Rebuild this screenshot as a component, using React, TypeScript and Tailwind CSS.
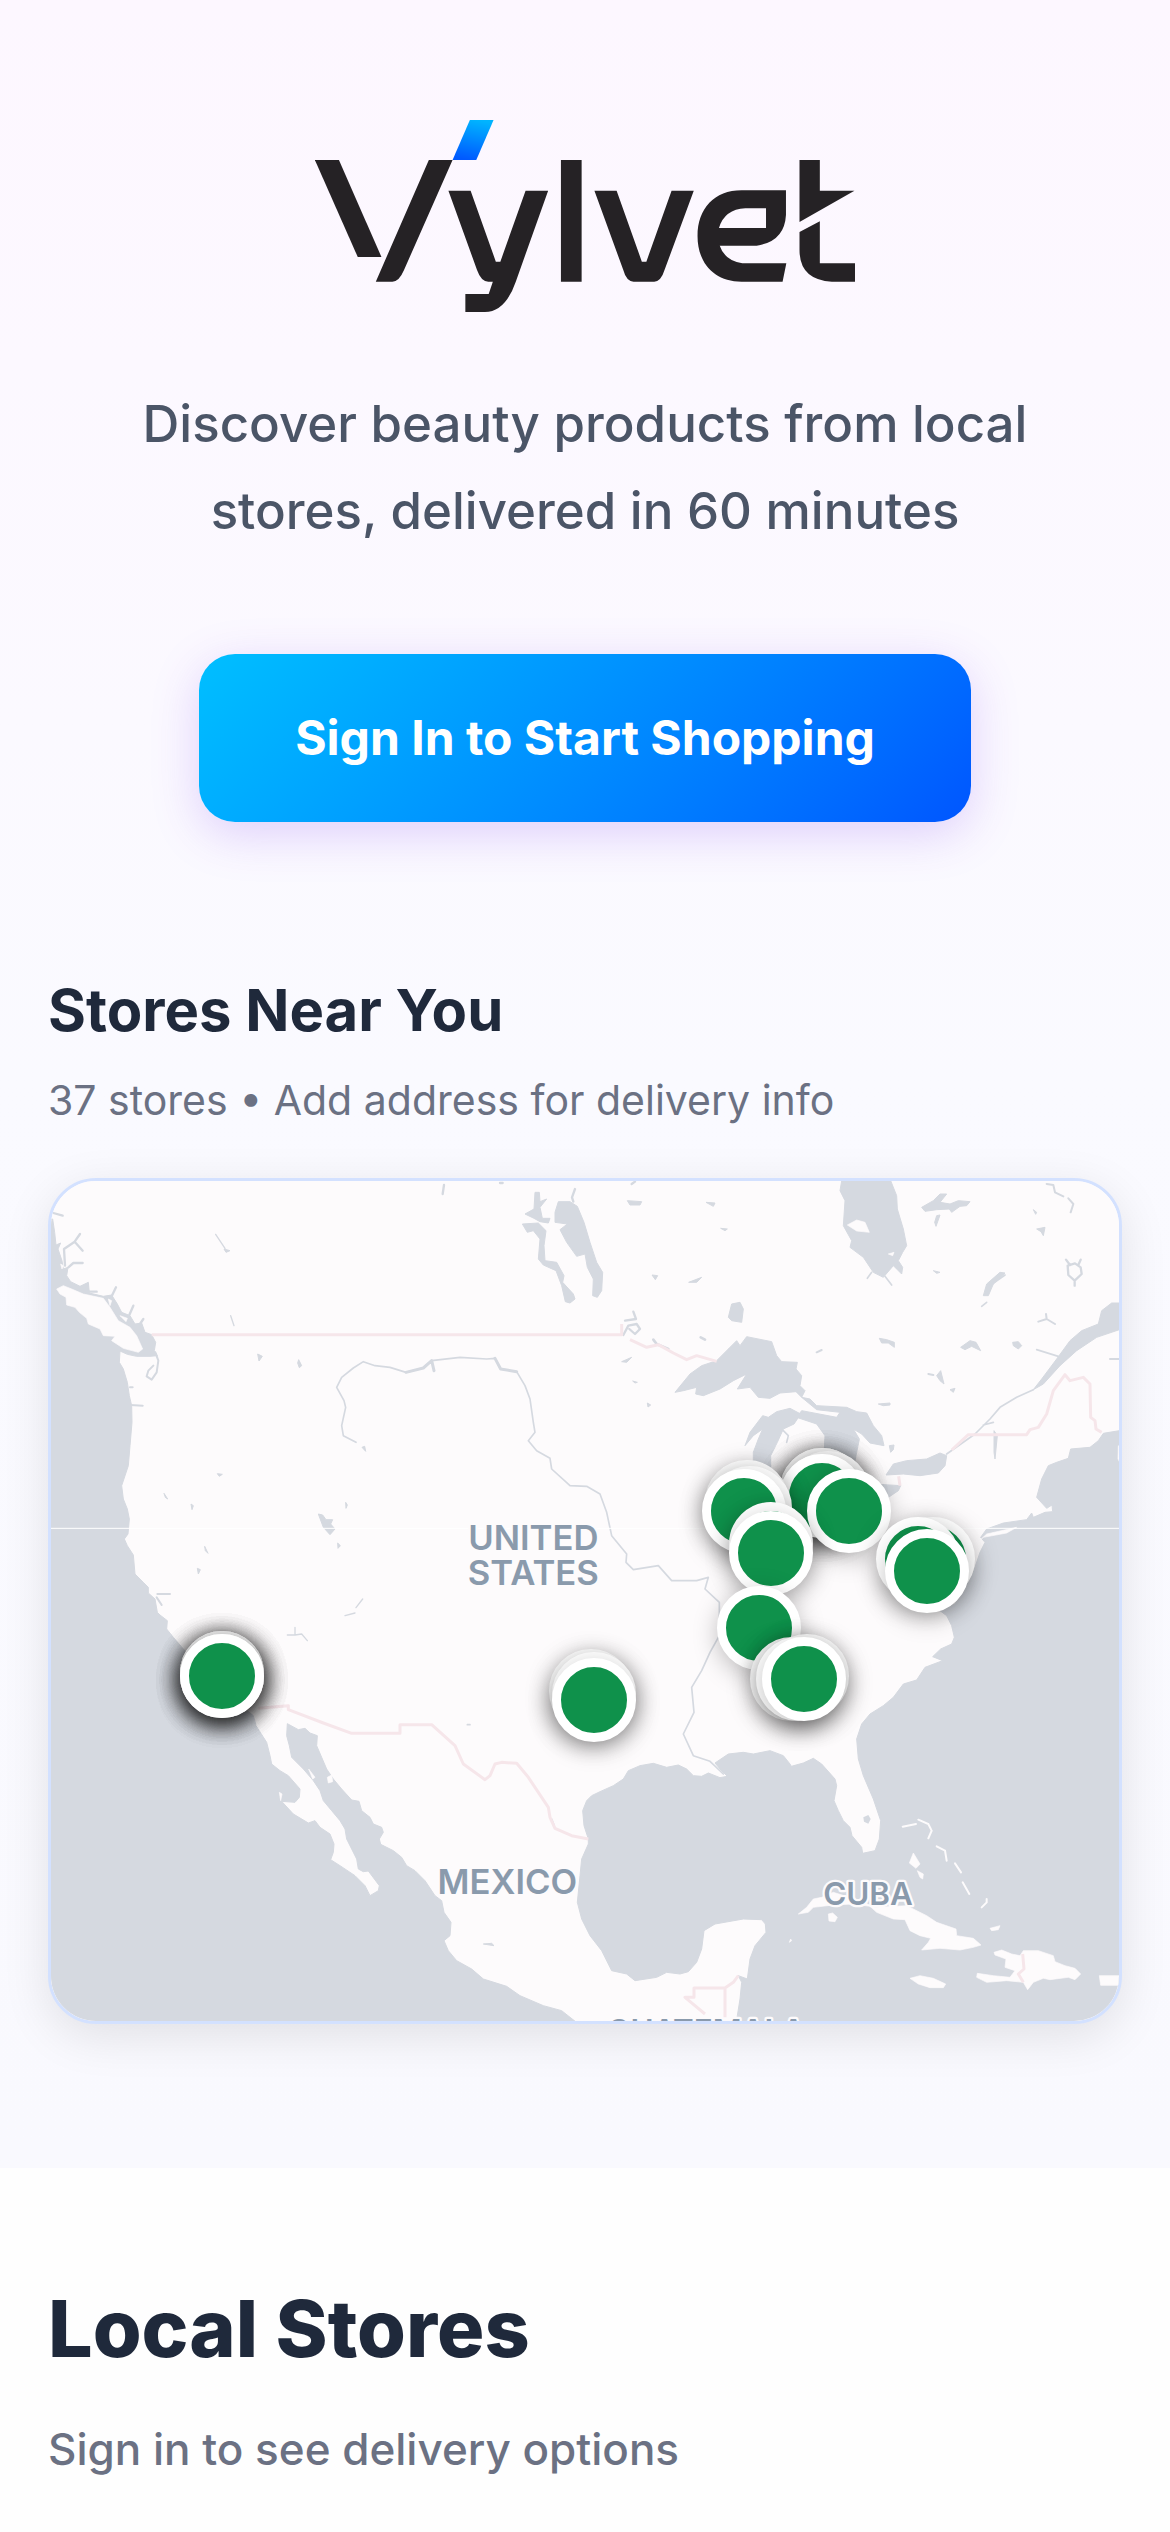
const WATER = '#d5d9e0';
const LAND = '#fdfbfc';
const BORDER = '#f6e6ea';

function Logo() {
  return (
    <svg role="img" aria-label="Vylvet" viewBox="25 20 540 192" className="h-auto w-[540px] max-w-full">
      <defs>
        <linearGradient id="accent" x1="0.6" y1="0" x2="0.4" y2="1">
          <stop offset="0" stopColor="#00b4ff" />
          <stop offset="1" stopColor="#0059ff" />
        </linearGradient>
      </defs>
      <g transform="scale(0.3763 0.3333)" fill="#252225">
        <path fill="url(#accent)" d="M478 60H541L495 180H432Z" />
        <path d="M66 180H130L243 471H180Z" />
        <path d="M369 180H432L303 510Q290 545 272 545H228Z" />
        <path d="M421 272H480L547 485H559L626 272H686L600 545Q572 636 518 636H466V582H528L539 545H527Q508 545 497 510Z" />
        <path d="M720 180H775V545H720Z" />
        <path d="M809 272H868L935 485H947L1014 272H1073L996 508Q986 545 968 545H913Q894 545 885 508Z" />
        <path fillRule="evenodd" d="M1200 271H1318V345Q1314 425 1240 437H1142Q1155 482 1202 490H1319L1309 545H1200C1128 545 1083 490 1083 408C1083 326 1128 271 1200 271ZM1210 325Q1155 328 1140 384H1265V325Z" />
        <path d="M1354 180H1408V272H1500L1354 366Z" />
        <path d="M1354 396L1408 364V490H1502V545H1440Q1354 540 1354 450Z" />
      </g>
    </svg>
  );
}

function MapArt() {
  return (
    <svg aria-hidden="true" viewBox="33 36 3204 2520" className="block h-full w-full">
      <rect x="33" y="36" width="3204" height="2520" fill={LAND} />

      <g fill={WATER} stroke={WATER} strokeWidth="3" strokeLinejoin="round">
        {/* Pacific coast and Gulf of California */}
        <path d="M20 150L38 150 44 190 48 228 62 222 54 240 66 275 70 300 84 295 80 320 92 338 120 352 145 340 148 372 190 382 215 378 232 405 245 430 270 440 285 465 305 462 315 490 335 497 347 520 343 545 352 560 330 562 290 562 262 556 240 546 238 580 250 600 262 640 268 680 275 710 276 760 270 830 265 890 245 950 250 990 262 1020 268 1050 264 1095 253 1110 262 1130 280 1158 285 1215 310 1240 325 1255 325 1272 345 1290 352 1330 360 1338 382 1355 380 1380 400 1405 430 1440 540 1560 640 1640 648 1670 680 1720 690 1760 695 1785 720 1805 745 1820 780 1860 778 1885 765 1900 725 1897 760 1935 805 1962 825 1955 840 1975 870 1995 882 2025 880 2050 872 2072 900 2090 945 2120 975 2150 990 2180 1015 2165 1018 2150 985 2106 970 2108 955 2100 950 2070 920 2010 915 1980 900 1955 875 1925 850 1895 840 1865 820 1835 790 1800 755 1765 748 1730 740 1700 742 1664 775 1682 795 1678 810 1692 832 1700 830 1730 845 1765 860 1800 880 1830 905 1860 935 1893 957 1897 965 1925 990 1945 1000 1965 1025 1975 1030 1990 1018 2010 1022 2026 1060 2045 1085 2065 1100 2090 1125 2105 1155 2135 1185 2180 1205 2195 1212 2230 1233 2260 1230 2300 1212 2315 1225 2345 1250 2375 1295 2400 1330 2430 1400 2452 1440 2480 1510 2510 1565 2525 1622 2570 20 2570Z" />
        {/* Gulf of Mexico, Florida and the Atlantic seaboard */}
        <path d="M1645 2010L1632 1970 1628 1925 1640 1895 1655 1880 1680 1868 1720 1850 1750 1830 1765 1805 1800 1790 1840 1783 1880 1795 1915 1788 1940 1800 1960 1820 1985 1822 2005 1812 2040 1826 2062 1822 2040 1800 2025 1782 2065 1755 2110 1750 2140 1755 2190 1745 2230 1760 2250 1785 2254 1792 2290 1782 2320 1768 2345 1785 2385 1830 2390 1850 2382 1895 2395 1925 2410 1955 2430 1975 2436 2000 2465 2035 2468 2053 2505 2045 2518 2010 2522 1955 2500 1890 2470 1820 2455 1770 2450 1710 2465 1665 2490 1635 2530 1610 2560 1585 2590 1545 2630 1533 2655 1495 2708 1475 2678 1463 2702 1440 2735 1425 2743 1405 2735 1370 2720 1340 2700 1325 2745 1305 2800 1210 2820 1150 2835 1120 2822 1105 2840 1080 2890 1062 2960 1052 2975 1032 2980 1045 3015 1030 3038 1028 3036 1008 3020 1018 2990 985 3005 930 3025 890 3050 880 3085 868 3092 840 3150 835 3175 815 3190 793 3250 783V2570H2088L2092 2540 2100 2490 2105 2440 2095 2420 2122 2430 2130 2370 2145 2330 2178 2290 2176 2265 2165 2252 2110 2250 2025 2265 1992 2285 1985 2340 1970 2380 1945 2408 1920 2415 1880 2410 1850 2425 1785 2435 1760 2415 1715 2405 1685 2345 1650 2300 1625 2250 1612 2200 1620 2120 1625 2070 1645 2025Z" />
        {/* James Bay */}
        <path d="M2406 30L2400 65 2415 95 2410 170 2435 215 2430 235 2470 265 2500 310 2530 325 2560 290 2585 315 2588 295 2575 275 2588 250 2600 230 2590 180 2572 120 2570 80 2550 30Z" />
        {/* Lakes Winnipeg and Manitoba */}
        <path d="M1555 98L1590 98 1612 112 1632 160 1650 220 1670 280 1688 310 1685 365 1672 385 1658 380 1660 330 1642 295 1635 255 1610 262 1580 220 1560 182 1582 165 1545 160 1545 130Z" />
        <path d="M1447 165L1495 162 1518 185 1512 230 1515 275 1550 280 1572 320 1568 340 1600 375 1605 390 1590 402 1576 398 1565 350 1548 305 1510 288 1495 270 1500 210 1480 185 1462 190Z" />
        <path d="M1455 135L1482 120 1485 70H1498L1500 98 1520 90 1500 115 1507 148 1530 148 1525 162 1500 158 1482 148Z" />
        {/* Lake Superior */}
        <path d="M1905 670L1950 615 1985 590 2030 575 2065 540 2090 515 2100 530 2120 503 2195 518 2210 560 2225 578 2272 580 2268 600 2285 620 2280 650 2295 665 2285 685 2268 668 2220 672 2190 688 2155 685 2130 655 2092 660 2120 615 2080 635 2040 660 1990 680 1967 675 1970 655 1930 665Z" />
        {/* Lake Michigan */}
        <path d="M2115 830L2130 790 2168 740 2185 745 2210 728 2250 718 2282 735 2262 765 2230 780 2212 820 2192 860 2192 910H2140V850L2155 810 2168 780 2140 800Z" />
        {/* Lake Huron and Georgian Bay */}
        <path d="M2285 685L2310 690 2330 710 2420 715 2450 728 2480 732 2500 770 2525 800 2532 830 2490 822 2465 795 2440 780 2458 810 2450 850 2440 900H2350L2355 800 2330 765 2270 745 2285 725 2390 745 2400 730 2330 722Z" />
        {/* Lakes Erie and Ontario */}
        <path d="M2500 945L2582 950 2575 965 2550 982 2500 1010Z" />
        <path d="M2538 918L2560 885 2600 875 2660 870 2700 852 2720 860 2715 890 2695 912 2640 920 2590 915Z" />
        {/* Gulf of St Lawrence */}
        <path d="M3250 402H3215L3185 425 3175 465 3125 485 3090 515 3050 570 3005 630 2980 662 3010 645 3060 590 3110 545 3170 505 3250 478Z" />
        {/* Inland lakes */}
        <path d="M835 1035L848 1038 858 1052 878 1052 872 1065 885 1080 870 1097 850 1075Z" />
        <path d="M2645 115L2680 95 2700 75 2720 75 2700 100 2730 105 2755 95 2790 98 2780 110 2760 112 2735 130 2728 120 2690 122 2655 127Z" />
        <path d="M2690 140L2700 138 2688 172 2684 160Z" />
        <path d="M2830 380L2840 345 2880 310 2895 312 2860 345 2845 380Z" />
        <path d="M2065 445L2075 405 2100 400 2110 420 2105 460 2075 455Z" />
        <path d="M2762 535L2790 515 2808 520 2822 545 2795 532 2775 542Z" />
        <path d="M2918 520L2935 518 2945 530 2935 540 2920 530Z" />
        <path d="M2518 508L2540 512 2563 520 2563 535 2545 522 2525 522Z" />
        <path d="M1762 95L1805 98 1800 108 1770 108Z" />
        <path d="M1998 100L2025 102 2020 112Z" />
        <path d="M2042 178L2062 180 2055 185Z" />
        <path d="M1836 318L1853 320 1846 332Z" />
        <path d="M1946 340L1985 325 1970 340Z" />
        <path d="M1745 578L1775 565 1760 580Z" />
        <path d="M1778 636L1792 640 1785 642Z" />
        <path d="M1822 702L1832 708 1824 714Z" />
        <path d="M776 572L785 590 778 596 773 582Z" />
        <path d="M653 555L667 562 657 576Z" />
        <path d="M552 240L570 245 558 250Z" />
        <path d="M532 914L547 916 538 922Z" />
        <path d="M372 973L383 990 376 985Z" />
        <path d="M453 1005L460 1010 456 1022Z" />
        <path d="M494 1132L504 1153 496 1145Z" />
        <path d="M472 1198L481 1202 475 1215Z" />
        <path d="M893 1122L901 1130 894 1138Z" />
        <path d="M917 1000L922 1008 918 1018Z" />
        <path d="M966 835L974 832 977 847Z" />
        <path d="M2862 785L2872 800 2865 870 2862 850Z" />
        <path d="M2680 305L2700 310 2690 313Z" />
        <path d="M2690 620L2702 605 2712 645 2700 635Z" />
        <path d="M2515 705L2550 702 2550 708 2530 710Z" />
        <path d="M2730 662L2745 658 2740 670Z" />
        <path d="M2548 830L2562 828 2560 842 2552 850Z" />
        <path d="M2990 180L3015 175 3010 200 3003 188Z" />
        <path d="M2980 122L2990 130 2987 136Z" />
        <path d="M1330 2325L1355 2323 1362 2330Z" />
      </g>

      {/* Inlets and rivers */}
      <g fill="none" stroke={WATER} strokeWidth="7" strokeLinejoin="round" strokeLinecap="round">
        <path d="M75 290L72 240 104 218 120 195M104 218L128 245M85 295L100 282 128 282M40 132L68 140" />
        <path d="M215 382L228 355M268 438L280 410M300 465L310 450M140 350L145 368 170 368" />
        <path d="M346 550L355 575 350 610 335 632 320 622 325 605 340 590M270 655H278M272 708L308 710M352 1275H390M350 1285L365 1308" strokeWidth="6" />
        <path d="M527 196L555 238M572 440L582 470M948 1316L968 1290M915 1340L945 1332M742 1398L765 1398 785 1395 802 1415M765 1398V1375" strokeWidth="4" />
        <path d="M948 820L910 800 905 770 917 715 912 695 890 655 905 625 940 597 970 578 1005 590 1050 595 1098 610 1150 597 1175 575 1260 565 1340 570 1365 568 1382 600 1430 608 1455 650 1470 690 1480 760 1485 790 1465 815 1490 845 1530 868 1535 900 1590 950 1640 952 1680 975 1700 1030 1715 1100 1760 1155 1758 1180 1780 1202 1855 1190 1895 1235 1970 1235 2005 1225 1995 1260 2038 1300V1400L2010 1450 1985 1505 1955 1555 1962 1630 1930 1695 1960 1760 2010 1777 2050 1815" strokeWidth="5" />
        <path d="M1098 610L1150 597 1175 575 1182 605M1365 568L1382 600 1430 608" strokeWidth="9" />
        <path d="M2980 662L2930 685 2880 715 2850 750 2805 795 2720 855M2830 768L2860 760M2990 542L3055 562" strokeWidth="5" />
        <path d="M1600 98L1596 85 1605 60M1208 75L1212 48M1380 42H1388M1775 45L1785 38" />
        <path d="M1750 498L1765 470 1790 465 1800 480 1785 495 1768 480M1755 455L1788 450 1780 428" />
        <path d="M1840 512L1850 525 1885 540M1982 505L1995 512" strokeWidth="8" />
        <path d="M2495 310L2482 328M2535 322L2555 348M2825 412L2840 400M2850 350L2895 318" strokeWidth="5" />
        <path d="M3083 290L3105 283 3122 295 3125 315 3104 335 3085 318 3083 290M3104 335V350M3078 272L3090 288M3122 272L3115 288" />
        <path d="M3020 45L3040 48 3045 70 3070 82M3085 88L3100 105 3092 130M2995 458L3020 450 3018 435M3020 450L3045 465M2330 550L2345 543M2665 615L2680 618M3210 570H3240" strokeWidth="6" />
        <path d="M1282 1667L1290 1667M1535 1950L1542 1968M2230 785L2245 800 2240 820" strokeWidth="5" />
      </g>

      {/* Islands */}
      <g fill={LAND} stroke={LAND} strokeWidth="2" strokeLinejoin="round">
        <path d="M50 360L70 350 95 360 130 375 190 388 210 415 235 455 270 475 290 500 308 540 295 550 250 538 215 515 225 502 190 500 180 480 145 465 140 448 118 430 105 415 80 408 78 385 60 375Z" />
        <path d="M62 285L70 290 66 300ZM205 390L215 395 210 410ZM240 440L262 448 258 458Z" />
        <path d="M2422 168L2450 153 2475 160 2488 190 2450 186ZM2545 255L2562 250 2558 260Z" />
        <path d="M806 1800L825 1825 818 1830ZM862 1825L875 1818 878 1838 865 1842ZM718 1870L726 1875 722 1895Z" />
        <path d="M2275 2235L2300 2215 2320 2190 2345 2185 2380 2170 2460 2195 2505 2215 2600 2210 2660 2240 2690 2260 2748 2280 2750 2300 2800 2308 2823 2328 2800 2335 2760 2343 2700 2338 2645 2343 2665 2320 2672 2308 2640 2300 2610 2285 2595 2252 2560 2250 2510 2230 2490 2212 2440 2205 2380 2208 2320 2215 2305 2230Z" />
        <path d="M2365 2235L2378 2232 2392 2245 2385 2258 2367 2256Z" />
        <path d="M2862 2350L2885 2343 2915 2355 2940 2360 2950 2345 2995 2345 3040 2360 3045 2378 3075 2390 3105 2398 3122 2415 3105 2432 3085 2425 3030 2432 3010 2428 2980 2440 2963 2462 2950 2440 2900 2435 2840 2440 2810 2425 2812 2413 2860 2420 2910 2425 2925 2405 2895 2395 2898 2370 2865 2358Z" />
        <path d="M2610 2428L2640 2420 2680 2428 2717 2445 2710 2456 2670 2456 2635 2445Z" />
        <path d="M3178 2420H3245V2449H3182ZM2850 2278L2880 2270 2875 2282 2855 2285Z" />
        <path d="M2620 2052L2640 2085 2628 2098 2608 2082ZM2632 2105L2650 2115 2648 2130 2640 2125Z" />
        <path d="M2822 1112L2840 1095 2930 1075 2900 1092 2830 1105ZM3235 830L3242 835V885L3234 870Z" />
        <path d="M2252 2310L2255 2315 2248 2320Z" />
      </g>
      <path d="M2588 1973L2628 1965M2635 1952L2665 1965 2675 1985 2665 2008M2690 2032L2715 2045 2720 2075M2745 2083L2763 2110M2768 2140L2788 2175M2825 2215L2840 2200V2190" fill="none" stroke={LAND} strokeWidth="6" strokeLinecap="round" />
      <path d="M2470 1945L2485 1938 2492 1950 2485 1964 2472 1958Z" fill={WATER} />

      {/* Country borders */}
      <g fill="none" stroke={BORDER} strokeWidth="9" strokeLinejoin="round">
        <path d="M335 497H1745V465M1770 512L1820 535 1855 527 1900 552 1940 572 1970 560 2030 577" />
        <path d="M2735 843L2785 797H2960L2970 782 2995 775 3020 735 3040 665 3075 617 3090 635 3130 625 3150 645 3152 745 3165 755 3168 780 3185 790M2576 922L2580 950" />
        <path d="M655 1618L745 1610V1622L850 1662 935 1693H1080V1667H1175L1245 1730 1270 1785 1335 1832 1350 1820 1365 1785 1385 1780 1430 1783 1465 1825 1525 1915 1530 1945 1545 1978 1595 2000 1645 2010" />
        <path d="M1995 2535L1935 2485H1962V2457H2055L2080 2440 2095 2420M2055 2457V2545M2948 2355L2952 2400 2935 2415 2950 2440" />
      </g>
      <path d="M33 1078H3237" stroke="#fff" strokeWidth="3" />

      <g fill="#8a9aac" stroke={LAND} strokeWidth="14" strokeLinejoin="round" paintOrder="stroke" textAnchor="middle" fontFamily="Inter, sans-serif" fontWeight="600">
        <text fontSize="104">
          <tspan x="1480" y="1144">UNITED</tspan>
          <tspan x="1480" y="1247">STATES</tspan>
        </text>
        <text x="1402" y="2175" fontSize="104">MEXICO</text>
        <text x="2484" y="2207" fontSize="94">CUBA</text>
        <text x="1998" y="2618" fontSize="94">GUATEMALA</text>
      </g>
    </svg>
  );
}

type Pin = { x: number; y: number; stores: number };

// Pin centres in map pixels, drawn back to front; each one stacks a marker per store.
const MAP_WIDTH = 1068;
const MAP_HEIGHT = 840;
const pins: Pin[] = [
  { x: 771, y: 309, stores: 4 },
  { x: 777, y: 312, stores: 1 },
  { x: 771, y: 315, stores: 2 },
  { x: 696, y: 321, stores: 1 },
  { x: 699, y: 327, stores: 1 },
  { x: 693, y: 330, stores: 1 },
  { x: 798, y: 330, stores: 1 },
  { x: 720, y: 363, stores: 1 },
  { x: 720, y: 372, stores: 1 },
  { x: 882, y: 378, stores: 1 },
  { x: 867, y: 378, stores: 1 },
  { x: 876, y: 390, stores: 1 },
  { x: 708, y: 447, stores: 1 },
  { x: 741, y: 498, stores: 1 },
  { x: 756, y: 495, stores: 1 },
  { x: 747, y: 498, stores: 1 },
  { x: 753, y: 498, stores: 1 },
  { x: 171, y: 492, stores: 5 },
  { x: 171, y: 495, stores: 3 },
  { x: 540, y: 510, stores: 1 },
  { x: 543, y: 513, stores: 1 },
  { x: 543, y: 519, stores: 1 },
];

function StoreMap() {
  return (
    <div className="relative mt-12 aspect-[1074/846] w-full overflow-hidden rounded-[48px] border-3 border-[#d3e1ff] bg-[#fdfbfc] shadow-[0_12px_48px_rgba(0,0,0,0.1)]">
      <MapArt />
      {pins.flatMap((pin, i) =>
        Array.from({ length: pin.stores }, (_, n) => (
          <button
            key={`${i}-${n}`}
            type="button"
            aria-label="Store"
            className="absolute size-[84px] -translate-1/2 rounded-full border-[9px] border-white bg-[#0f914b] shadow-[0_6px_24px_rgba(0,0,0,0.25)]"
            style={{ left: `${(pin.x / MAP_WIDTH) * 100}%`, top: `${(pin.y / MAP_HEIGHT) * 100}%` }}
          />
        )),
      )}
    </div>
  );
}

export default function App() {
  return (
    <main className="min-h-screen bg-[#fefefe] font-['Inter',sans-serif]">
      <div className="bg-linear-to-b from-[#fdf7ff] via-[#fafaff] via-50% to-[#f9f9fe] px-12 pt-30 pb-36">
        <header className="flex flex-col items-center">
          <Logo />
          <p className="mt-17 max-w-[960px] text-center text-[51px] leading-[87px] font-medium text-[#4b5567]">
            Discover beauty products from local stores, delivered in 60 minutes
          </p>
          <button
            type="button"
            className="mt-25 rounded-[36px] bg-linear-135 from-[#00bfff] to-[#0055ff] px-24 py-13 text-[48px] leading-16 font-bold text-white shadow-[0_12px_48px_rgba(124,58,237,0.22)]"
          >
            Sign In to Start Shopping
          </button>
        </header>
        <section className="mt-38">
          <h2 className="text-[58px] leading-18 font-bold text-[#1f293b]">Stores Near You</h2>
          <p className="mt-6 text-[41px] leading-15 text-[#6b7183]">37 stores • Add address for delivery info</p>
          <StoreMap />
        </section>
      </div>
      <section className="px-12 pt-28 pb-12">
        <h1 className="text-[79px] leading-24 font-extrabold text-[#1f293b]">Local Stores</h1>
        <p className="mt-10 text-[44px] leading-[66px] font-medium text-[#6b7183]">Sign in to see delivery options</p>
      </section>
    </main>
  );
}
